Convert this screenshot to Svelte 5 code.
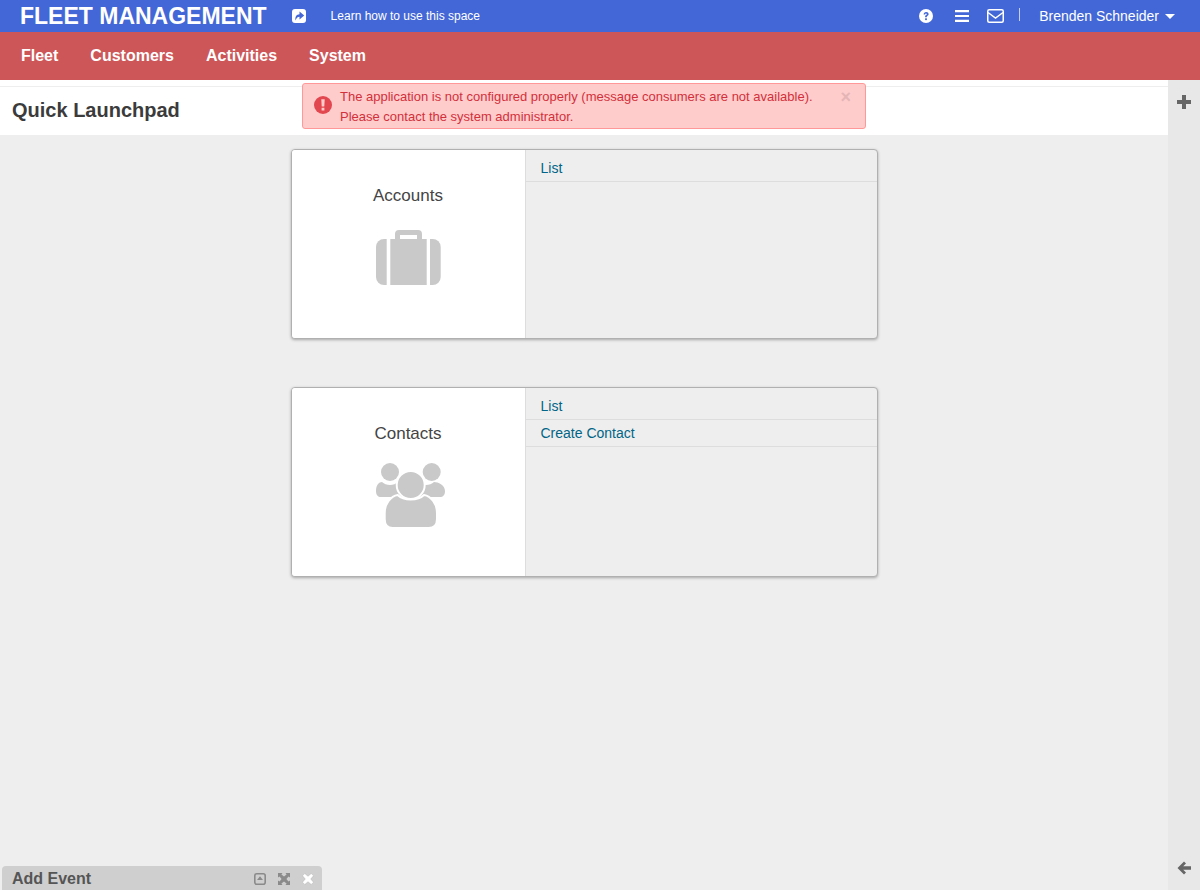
<script>
	const navItems = ["Fleet", "Customers", "Activities", "System"];
	const cards = [
		{ title: "Accounts", icon: "briefcase", links: ["List"] },
		{ title: "Contacts", icon: "users", links: ["List", "Create Contact"] }
	];
</script>

<div class="page">
	<header class="topbar">
		<span class="brand">FLEET MANAGEMENT</span>
		<svg class="share" viewBox="0 0 14 14" width="14" height="14">
			<rect width="14" height="14" rx="3" fill="#fff" />
			<path d="M3.500 11.500C2.800 8 4.500 5.300 7.500 5.200V2.600L12.200 6.500 7.500 10.400V7.700C5.500 7.700 4.300 9 3.500 11.500z" fill="#4367d6" />
		</svg>
		<a class="learn" href="#learn">Learn how to use this space</a>
		<div class="top-right">
			<svg viewBox="0 0 14 14" width="14" height="14">
				<circle cx="7" cy="7" r="7" fill="#fff" />
				<path d="M4.600 5.400C4.700 3.900 5.700 3 7.100 3c1.500 0 2.500.9 2.500 2.100 0 1-.6 1.500-1.200 1.900-.5.300-.6.500-.6 1v.2H6.100v-.4c0-.9.400-1.300 1-1.700.5-.3.700-.5.700-.9 0-.4-.3-.7-.8-.7s-.8.300-.9.900z" fill="#4367d6" />
				<rect x="6.100" y="9.300" width="1.800" height="1.800" fill="#4367d6" />
			</svg>
			<svg class="bars" viewBox="0 0 14 12" width="14" height="12">
				<path d="M0 0h14v2.200H0zM0 4.900h14v2.200H0zM0 9.800h14V12H0z" fill="#fff" />
			</svg>
			<svg class="mail" viewBox="0 0 17 14" width="17" height="14">
				<rect x=".75" y=".75" width="15.500" height="12.500" rx="1.500" fill="none" stroke="#fff" stroke-width="1.500" />
				<path d="M1 3.500l7.500 5.500L16 3.500" fill="none" stroke="#fff" stroke-width="1.500" />
			</svg>
			<span class="divider"></span>
			<span class="user">Brenden Schneider</span>
			<span class="caret"></span>
		</div>
	</header>

	<nav class="navbar">
		{#each navItems as item}
			<a href="#nav">{item}</a>
		{/each}
	</nav>

	<div class="body-row">
		<main class="main">
			<div class="title-bar">
				<h1>Quick Launchpad</h1>
			</div>
			<div class="cards">
				{#each cards as card}
					<section class="card">
						<div class="card-left">
							<h2>{card.title}</h2>
							{#if card.icon === "briefcase"}
								<svg class="card-icon briefcase" viewBox="0 0 65 56" width="65" height="56">
									<path d="M10.700 9v46H8a8 8 0 0 1-8-8V17a8 8 0 0 1 8-8z" fill="#c9c9c9" />
									<path d="M54 9h2.700a8 8 0 0 1 8 8v30a8 8 0 0 1-8 8H54z" fill="#c9c9c9" />
									<path d="M14.300 9H19V4a4 4 0 0 1 4-4h19a4 4 0 0 1 4 4v5h4.700v46H14.300zM24 5v4h17V5z" fill="#c9c9c9" fill-rule="evenodd" />
								</svg>
							{:else}
								<svg class="card-icon users" viewBox="0 0 70 67" width="70" height="67">
									<circle cx="14" cy="10" r="9" fill="#c9c9c9" />
									<circle cx="55.700" cy="10" r="9" fill="#c9c9c9" />
									<path d="M0 29c0-6 3-9 6-9 2 2 5 3 8 3s6-1 8-3c4 1 6 4 6 9v6H5c-3 0-5-2-5-6z" fill="#c9c9c9" />
									<path d="M42 20c2 2 5 3 8 3s6-1 8-3c4 0 11 3 11 9 0 4-2 6-5 6H42z" fill="#c9c9c9" />
									<path d="M16.700 66h36c5 0 8.300-3 8.300-9v-6c0-9-6-17-13-18-3 3-8 4.500-13.300 4.500s-10-1.500-13-4.500c-7 1-13 9-13 18v6c0 6 3 9 8 9z" fill="#c9c9c9" stroke="#fff" stroke-width="2" />
									<circle cx="34.700" cy="23" r="14" fill="#c9c9c9" stroke="#fff" stroke-width="2" />
								</svg>
							{/if}
						</div>
						<ul class="card-links">
							{#each card.links as link}
								<li><a href="#link">{link}</a></li>
							{/each}
						</ul>
					</section>
				{/each}
			</div>
		</main>
		<aside class="sidebar">
			<svg viewBox="0 0 14 14" width="14" height="14">
				<path d="M5 0h4v5h5v4H9v5H5V9H0V5h5z" fill="#666" />
			</svg>
			<svg viewBox="0 0 14 14" width="14" height="14">
				<path d="M7 .5l2 2-2.800 2.800H14v3.400H6.200L9 11.500l-2 2L.5 7z" fill="#666" />
			</svg>
		</aside>
	</div>

	<div class="alert">
		<svg class="alert-icon" viewBox="0 0 18 18" width="18" height="18">
			<circle cx="9" cy="9" r="9" fill="#e2474f" />
			<path d="M7.300 3.200h3.400l-.4 7.300H7.700zM7.600 11.700h2.800v2.900H7.600z" fill="#ffcccc" />
		</svg>
		<p>The application is not configured properly (message consumers are not available).<br />Please contact the system administrator.</p>
		<span class="alert-close">×</span>
	</div>

	<div class="event-bar">
		<span class="event-title">Add Event</span>
		<svg viewBox="0 0 12 12" width="12" height="12">
			<rect x=".8" y=".8" width="10.400" height="10.400" rx="2" fill="none" stroke="#8a8a8a" stroke-width="1.600" />
			<path d="M6 3.300l3 3.700H3z" fill="#8a8a8a" />
		</svg>
		<svg viewBox="0 0 12 12" width="12" height="12">
			<path d="M0 0h4.500L3.400 1.500 6 3.600 8.600 1.500 7.500 0H12v4.500l-1.500-1.100L8.400 6l2.100 2.600L12 7.500V12H7.500l1.100-1.500L6 8.400l-2.600 2.100L4.500 12H0V7.500l1.500 1.100L3.600 6 1.500 3.400 0 4.500z" fill="#8a8a8a" />
		</svg>
		<svg viewBox="0 0 12 12" width="12" height="12">
			<path d="M2.800.5L6 3.300 9.200.5l2.300 2.300L8.700 6l2.800 3.200-2.300 2.300L6 8.700l-3.200 2.800L.5 9.200 3.300 6 .5 2.800z" fill="#fff" stroke="#aaa" stroke-width=".4" />
		</svg>
	</div>
</div>

<style>
	:global(body) {
		margin: 0;
		background: #eee;
	}

	.page {
		position: relative;
		display: flex;
		flex-direction: column;
		height: 890px;
		overflow: hidden;
		font-family: "Liberation Sans", Arial, sans-serif;
		color: #333;
	}

	a {
		text-decoration: none;
	}

	.topbar {
		display: flex;
		align-items: center;
		flex: 0 0 32px;
		padding-left: 20px;
		background: #4367d6;
		color: #fff;
	}

	.brand {
		font-size: 23px;
		font-weight: 700;
	}

	.share {
		margin-left: 25px;
	}

	.learn {
		margin-left: 25px;
		font-size: 12px;
		color: #fff;
	}

	.top-right {
		display: flex;
		align-items: center;
		margin-left: auto;
		padding-right: 25px;
	}

	.bars {
		margin-left: 22px;
	}

	.mail {
		margin-left: 18px;
	}

	.divider {
		width: 1px;
		height: 13px;
		margin: -3px 19px 0 15px;
		background: #c5d0f0;
	}

	.user {
		font-size: 14px;
	}

	.caret {
		width: 0;
		height: 0;
		margin-left: 6px;
		border-left: 5px solid transparent;
		border-right: 5px solid transparent;
		border-top: 5px solid #fff;
	}

	.navbar {
		display: flex;
		align-items: center;
		gap: 32px;
		flex: 0 0 48px;
		padding-left: 21px;
		background: #cd5658;
	}

	.navbar a {
		font-size: 16px;
		font-weight: 700;
		color: #fff;
	}

	.body-row {
		display: flex;
		flex: 1;
		min-height: 0;
	}

	.main {
		flex: 1;
		min-width: 0;
	}

	.title-bar {
		display: flex;
		align-items: center;
		box-sizing: border-box;
		height: 49px;
		margin-top: 6px;
		margin-bottom: 14px;
		padding: 0 0 1px 12px;
		background: #fff;
		border-top: 1px solid #eee;
		box-shadow: 0 -6px 0 #fff;
	}

	h1 {
		margin: 0;
		font-size: 20px;
		font-weight: 700;
		color: #3b3b3b;
	}

	.cards {
		display: flex;
		flex-direction: column;
		align-items: center;
		gap: 48px;
	}

	.card {
		display: flex;
		box-sizing: border-box;
		width: 587px;
		height: 190px;
		background: #eee;
		border: 1px solid #b0b0b0;
		border-radius: 4px;
		box-shadow: 0 1px 3px rgba(0, 0, 0, 0.3);
		overflow: hidden;
	}

	.card-left {
		display: flex;
		flex-direction: column;
		align-items: center;
		box-sizing: border-box;
		width: 234px;
		padding-top: 35px;
		background: #fff;
		border-right: 1px solid #ddd;
	}

	h2 {
		margin: 0;
		font-size: 17px;
		font-weight: 400;
		line-height: 22px;
		color: #444;
	}

	.card-icon {
		margin-top: 23px;
	}

	.users {
		margin-top: 17px;
		margin-left: 6px;
	}

	.card-links {
		flex: 1;
		margin: 0;
		padding: 5px 0 0;
		list-style: none;
	}

	.card-links li {
		height: 27px;
		box-sizing: border-box;
		padding: 5px 0 0 15px;
		border-bottom: 1px solid #ddd;
		font-size: 14px;
		line-height: 17px;
	}

	.card-links a {
		color: #006587;
	}

	.sidebar {
		display: flex;
		flex-direction: column;
		align-items: center;
		justify-content: space-between;
		box-sizing: border-box;
		width: 32px;
		padding: 15px 0;
		background: #e8e8e8;
	}

	.alert {
		position: absolute;
		top: 83px;
		left: 302px;
		display: flex;
		box-sizing: border-box;
		width: 564px;
		height: 46px;
		padding: 3px 0 0 11px;
		background: #fcc;
		border: 1px solid #f99;
		border-radius: 3px;
	}

	.alert-icon {
		margin-top: 9px;
	}

	.alert p {
		margin: 0 0 0 8px;
		font-size: 13px;
		line-height: 20px;
		color: #d2303a;
	}

	.alert-close {
		position: absolute;
		top: 3px;
		right: 14px;
		font-size: 18px;
		font-weight: 700;
		line-height: 20px;
		color: #e5b5b5;
	}

	.event-bar {
		position: absolute;
		left: 2px;
		bottom: 0;
		display: flex;
		align-items: center;
		gap: 12px;
		box-sizing: border-box;
		width: 320px;
		height: 24px;
		padding: 1px 8px 0 10px;
		background: #cfcfcf;
		border-radius: 4px 4px 0 0;
	}

	.event-title {
		margin-right: auto;
		font-size: 16px;
		font-weight: 700;
		color: #555;
	}
</style>
